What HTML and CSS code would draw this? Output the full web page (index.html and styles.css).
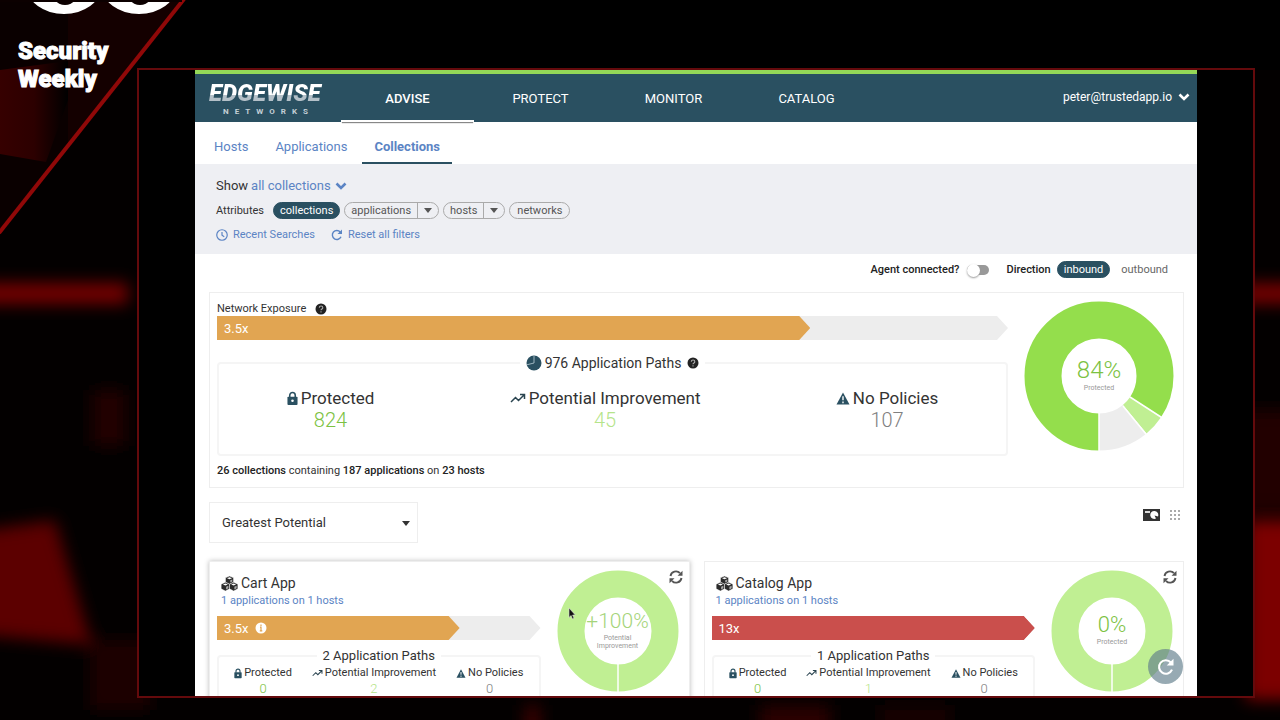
FILE: index.html
```
<!DOCTYPE html>
<html lang="en">
<head>
  <meta charset="UTF-8" />
  <meta name="viewport" content="width=device-width, initial-scale=1.0" />
  <title>Edgewise Networks - Collections</title>
  <link rel="stylesheet" href="styles.css">
</head>
<body>
  <!-- Shared icons -->
  <svg class="sprite" aria-hidden="true">
    <symbol id="chevron" viewBox="0 0 12 8"><path d="M1.500 1.500 6 6l4.500-4.500" fill="none" stroke="currentColor" stroke-width="2.600"/></symbol>
    <symbol id="caret" viewBox="0 0 8 5"><path d="M0 0h8L4 5z" fill="currentColor"/></symbol>
    <symbol id="clock" viewBox="0 0 24 24"><g fill="none" stroke="currentColor" stroke-width="2.400"><circle cx="12" cy="12" r="10.500"/><path d="M12 6v6.500l4.500 3"/></g></symbol>
    <symbol id="reload" viewBox="0 0 24 24"><path d="M20 15.500A9 9 0 1 1 18.500 6" fill="none" stroke="currentColor" stroke-width="2.800"/><path d="M22 1v9h-9z" fill="currentColor"/></symbol>
    <symbol id="help" viewBox="0 0 12 12"><circle cx="6" cy="6" r="5.500" fill="#222"/><path d="M4.300 4.700c0-2.200 3.500-2.200 3.500 0C7.800 6 6 5.900 6 7.300M6 8.300v1.100" fill="none" stroke="#aaa" stroke-width="1.100"/></symbol>
    <symbol id="info" viewBox="0 0 12 12"><circle cx="6" cy="6" r="5.500" fill="#fff"/><path d="M6 2.600v1.300M5 5.200h1v3.500M4.800 8.800h2.500" fill="none" stroke="#e1a552" stroke-width="1.200"/></symbol>
    <symbol id="pie" viewBox="0 0 16 16"><circle cx="8" cy="8" r="7.500" fill="#2a5061"/><path d="M8 .5V8L.8 9.800" fill="none" stroke="#9db4bf" stroke-width="1"/></symbol>
    <symbol id="lock" viewBox="0 0 12 16"><path d="M3 7V4.500a3 3 0 0 1 6 0V7" fill="none" stroke="#2a5061" stroke-width="1.700"/><rect x=".5" y="6" width="11" height="9" rx="1" fill="#2a5061"/><circle cx="6" cy="10.500" r="1.400" fill="#fff"/></symbol>
    <symbol id="trend" viewBox="0 0 16 10"><path d="M1 9l4.500-4.500 3 3L14 2M10 1.500h4.500V6" fill="none" stroke="#2a4450" stroke-width="1.500"/></symbol>
    <symbol id="warn" viewBox="0 0 16 15"><path d="M8 .5 15.500 14.500H.5z" fill="#2a5061"/><path d="M8 5v4.500M8 11v2" stroke="#fff" stroke-width="1.600"/></symbol>
    <symbol id="cubes" viewBox="0 0 18 16"><g fill="#2b2b2b" stroke="#fff" stroke-width=".5"><path d="M9 .1l4.300 1.800v4.800L9 8.800 4.700 6.700V1.900z"/><path d="M4.600 6.700l4.400 2v5L4.600 16 .1 13.700v-5z"/><path d="M13.400 6.700l4.500 2v5L13.400 16 9 13.700v-5z"/></g><path d="M6.400 2.300 9 3.400l2.600-1.100L9 1.300zM2 9l2.600 1.100L7.200 9 4.600 7.900zM10.800 9l2.600 1.100L16 9l-2.600-1.100z" fill="#fff"/><path d="M9.800 7V4.600L12 3.700v2.200zM5.400 14.300v-2.800l2.400-1.100v2.700zM14.200 14.300v-2.800l2.400-1.100v2.700z" fill="#aaa"/></symbol>
    <symbol id="sync" viewBox="0 0 14 14"><path d="M1.500 6A5.500 5.500 0 0 1 11 3.200M12.500 8A5.500 5.500 0 0 1 3 10.800" fill="none" stroke="currentColor" stroke-width="1.900"/><path d="M13.500.8v5H8.500zM.5 13.200v-5h5z" fill="currentColor"/></symbol>
  </svg>

  <!-- Broadcast backdrop -->
  <svg class="backdrop" viewBox="0 0 1280 720" preserveAspectRatio="none" aria-hidden="true">
    <defs>
      <filter id="soft" x="-50%" y="-50%" width="200%" height="200%"><feGaussianBlur stdDeviation="8"/></filter>
      <linearGradient id="wedge" x1="0" x2="1" y1="0" y2="0"><stop offset="0" stop-color="#360000"/><stop offset=".5" stop-color="#2c0000"/><stop offset="1" stop-color="#000"/></linearGradient>
    </defs>
    <rect width="1280" height="720" fill="#030000"/>
    <path d="M138 0H1280V70H138z"/>
    <g filter="url(#soft)">
      <rect x="-30" y="283" width="158" height="21" fill="#740000"/>
      <path d="M-30 532 55 520 92 645-30 634z" fill="#5c0000"/>
      <rect x="92" y="390" width="34" height="56" fill="#200000"/>
      <rect x="90" y="640" width="60" height="70" fill="#1d0000"/>
      <rect x="1240" y="283" width="70" height="21" fill="#740000"/>
      <rect x="1240" y="410" width="70" height="100" fill="#240000"/>
      <rect x="1246" y="520" width="70" height="180" fill="#7c0000"/>
      <rect x="525" y="705" width="15" height="30" fill="#3c0000"/>
      <rect x="760" y="705" width="70" height="30" fill="#2c0000"/>
      <rect x="880" y="705" width="70" height="30" fill="#180000"/>
    </g>
    <path d="M0 0H183L0 232z" fill="#0a0000"/>
    <path d="M68 0H183L68 146z" fill="#140000"/>
    <path d="M0 70 68 61V100L46 162 0 154z" fill="url(#wedge)"/>
    <path d="M184-1-1 233" stroke="#900808" stroke-width="4"/>
    <g fill="#fff"><ellipse cx="64" cy="-13" rx="37" ry="27"/><ellipse cx="139" cy="-13" rx="37" ry="27"/></g>
    <g fill="#0c0000"><ellipse cx="65" cy="-13" rx="15" ry="18"/><ellipse cx="140" cy="-13" rx="15" ry="18"/><rect width="182" height="2"/></g>
  </svg>
  <div class="channel">Security<br>Weekly</div>

  <div class="frame">
    <div class="app">
      <header class="topbar">
        <div class="brand">
          <span class="brand-name">EDGEWISE</span>
          <span class="brand-sub">NETWORKS</span>
        </div>
        <nav class="main-nav">
          <a class="active" href="#">ADVISE</a>
          <a href="#">PROTECT</a>
          <a href="#">MONITOR</a>
          <a href="#">CATALOG</a>
        </nav>
        <button class="account">peter@trustedapp.io <svg class="chev"><use href="#chevron"/></svg></button>
      </header>

      <nav class="sub-nav">
        <a href="#">Hosts</a>
        <a href="#">Applications</a>
        <a class="active" href="#">Collections</a>
      </nav>

      <section class="filters">
        <div class="show">Show <button class="link">all collections <svg class="chev"><use href="#chevron"/></svg></button></div>
        <div class="attributes">
          <span class="attr-label">Attributes</span>
          <button class="chip on">collections</button>
          <div class="chip split"><button>applications</button><button aria-label="More applications"><svg class="caret"><use href="#caret"/></svg></button></div>
          <div class="chip split"><button>hosts</button><button aria-label="More hosts"><svg class="caret"><use href="#caret"/></svg></button></div>
          <button class="chip">networks</button>
        </div>
        <div class="filter-links">
          <a href="#"><svg class="ic12"><use href="#clock"/></svg>Recent Searches</a>
          <a href="#"><svg class="ic12"><use href="#reload"/></svg>Reset all filters</a>
        </div>
      </section>

      <main class="content">
        <div class="options">
          <label for="agent">Agent connected?</label>
          <input class="toggle" type="checkbox" id="agent">
          <span class="direction">Direction</span>
          <button class="chip on">inbound</button>
          <button class="plain">outbound</button>
        </div>

        <section class="overview">
          <div class="details">
            <div class="exposure-title">Network Exposure <svg class="ic12"><use href="#help"/></svg></div>
            <div class="bar"><div class="fill orange" style="width: 75%">3.5x</div></div>
            <fieldset class="paths">
              <legend><svg class="ic16"><use href="#pie"/></svg>976 Application Paths<svg class="ic12 after"><use href="#help"/></svg></legend>
              <div class="stat"><span><svg class="lock"><use href="#lock"/></svg>Protected</span><b class="green">824</b></div>
              <div class="stat"><span><svg class="trend"><use href="#trend"/></svg>Potential Improvement</span><b class="lime">45</b></div>
              <div class="stat"><span><svg class="warn"><use href="#warn"/></svg>No Policies</span><b class="grey">107</b></div>
            </fieldset>
            <p class="summary"><strong>26 collections</strong> containing <strong>187 applications</strong> on <strong>23 hosts</strong></p>
          </div>
          <div class="donut">
            <svg viewBox="0 0 150 150">
              <g fill="none" stroke-width="37" transform="rotate(90 75 75)">
                <circle cx="75" cy="75" r="56" pathLength="1000" stroke="#94de4c" stroke-dasharray="844 156"/>
                <circle cx="75" cy="75" r="56" pathLength="1000" stroke="#c0ef93" stroke-dasharray="46 954" stroke-dashoffset="-844"/>
                <circle cx="75" cy="75" r="56" pathLength="1000" stroke="#ededed" stroke-dasharray="110 890" stroke-dashoffset="-890"/>
              </g>
              <path d="M75 112v38M106 96l34 22M99 105l27 33" stroke="#fff" stroke-width="1.500"/>
            </svg>
            <div class="donut-label"><span class="green">84%</span><small>Protected</small></div>
          </div>
        </section>

        <div class="sort-row">
          <div class="select">
            <select aria-label="Sort by"><option>Greatest Potential</option></select>
            <svg class="caret"><use href="#caret"/></svg>
          </div>
          <div class="views">
            <button aria-label="Card view"><svg width="17" height="12" viewBox="0 0 17 12"><path d="M0 0h17v12H0z" fill="#333"/><path d="M2 2h5v2H2z" fill="#ddd"/><path d="M11.500 2a4 4 0 1 0 1.500 7.600L11.500 6.500l3.500 1A4 4 0 0 0 11.500 2z" fill="#fff"/></svg></button>
            <button aria-label="Grid view"><svg width="12" height="12" viewBox="0 0 12 12"><path d="M1 2h2M5 2h2M9 2h2M1 6h2M5 6h2M9 6h2M1 10h2M5 10h2M9 10h2" stroke="#aaa" stroke-width="2"/></svg></button>
          </div>
        </div>

        <div class="cards">
          <article class="card raised">
            <div class="details">
              <h2><svg class="cubes"><use href="#cubes"/></svg>Cart App</h2>
              <a class="meta" href="#">1 applications on 1 hosts</a>
              <div class="bar"><div class="fill orange" style="width: 75%">3.5x <svg class="ic12"><use href="#info"/></svg></div></div>
              <fieldset class="paths small">
                <legend>2 Application Paths</legend>
                <div class="stat"><span><svg class="lock"><use href="#lock"/></svg>Protected</span><b class="green">0</b></div>
                <div class="stat"><span><svg class="trend"><use href="#trend"/></svg>Potential Improvement</span><b class="lime">2</b></div>
                <div class="stat"><span><svg class="warn"><use href="#warn"/></svg>No Policies</span><b class="grey">0</b></div>
              </fieldset>
            </div>
            <div class="donut">
              <svg viewBox="0 0 122 122"><circle cx="61" cy="61" r="47" fill="none" stroke="#c0ef93" stroke-width="27"/><path d="M61 94v28" stroke="#fff" stroke-width="1.500"/></svg>
              <div class="donut-label"><span class="lime-dark">+100%</span><small>Potential<br>Improvement</small></div>
            </div>
            <button class="sync" aria-label="Refresh Cart App"><svg><use href="#sync"/></svg></button>
          </article>

          <article class="card">
            <div class="details">
              <h2><svg class="cubes"><use href="#cubes"/></svg>Catalog App</h2>
              <a class="meta" href="#">1 applications on 1 hosts</a>
              <div class="bar"><div class="fill red" style="width: 100%">13x</div></div>
              <fieldset class="paths small">
                <legend>1 Application Paths</legend>
                <div class="stat"><span><svg class="lock"><use href="#lock"/></svg>Protected</span><b class="green">0</b></div>
                <div class="stat"><span><svg class="trend"><use href="#trend"/></svg>Potential Improvement</span><b class="lime">1</b></div>
                <div class="stat"><span><svg class="warn"><use href="#warn"/></svg>No Policies</span><b class="grey">0</b></div>
              </fieldset>
            </div>
            <div class="donut">
              <svg viewBox="0 0 122 122"><circle cx="61" cy="61" r="47" fill="none" stroke="#c0ef93" stroke-width="27"/><path d="M61 94v28" stroke="#fff" stroke-width="1.500"/></svg>
              <div class="donut-label"><span class="green">0%</span><small>Protected</small></div>
            </div>
            <button class="sync" aria-label="Refresh Catalog App"><svg><use href="#sync"/></svg></button>
          </article>
        </div>
      </main>

      <button class="fab" aria-label="Refresh"><svg><use href="#reload"/></svg></button>
    </div>
  </div>

  <svg class="cursor" viewBox="0 0 8 13" aria-hidden="true"><path d="M1 1v9.500l2-2 1.500 3.500 1.500-.7L4.600 8H7.300z" fill="#111" stroke="#ddd" stroke-width=".6"/></svg>
</body>
</html>
```
FILE: styles.css
```
* {
  box-sizing: border-box;
}
body {
  margin: 0;
  height: 100vh;
  overflow: hidden;
  display: flex;
  padding: 68px 25px 22px 137px;
  background: #000;
  color: #333;
  font-family: Roboto, "Liberation Sans", sans-serif;
  font-size: 11px;
}
a {
  color: #5b84c4;
  text-decoration: none;
}
button {
  border: 0;
  padding: 0;
  background: none;
  color: inherit;
  font: inherit;
  cursor: pointer;
}
svg {
  display: block;
  flex: none;
}
.sprite {
  position: absolute;
  width: 0;
  height: 0;
}
.backdrop {
  position: absolute;
  top: 0;
  left: 0;
  width: 100%;
  height: 100%;
}
.channel {
  position: absolute;
  top: 37px;
  left: 18px;
  color: #fff;
  font: 900 24px/28px Impact, Roboto, sans-serif;
  -webkit-text-stroke: 1px #fff;
}
.frame {
  position: relative;
  flex: 1;
  display: flex;
  min-width: 0;
  padding: 0 56px;
  background: #000;
  border: 2px solid #640a0c;
}
.app {
  position: relative;
  flex: 1;
  min-width: 0;
  overflow: hidden;
  background: #fff;
}

/* Header */
.topbar {
  display: flex;
  height: 52px;
  border-top: 4px solid #94d858;
  background: #2a5061;
  color: #fff;
}
.brand {
  width: 146px;
  padding: 6px 0 0 14px;
}
.brand-name {
  display: block;
  font: italic 900 24px/27px Roboto, sans-serif;
  background: linear-gradient(#fff 55%, #b4c0c8 55%);
  -webkit-background-clip: text;
  background-clip: text;
  color: transparent;
}
.brand-sub {
  display: block;
  padding-left: 14px;
  color: #c3cfd6;
  font: bold 8px/10px Roboto, sans-serif;
  letter-spacing: 6px;
}
.main-nav {
  display: flex;
}
.main-nav a {
  width: 133px;
  color: #fff;
  font-size: 13px;
  line-height: 50px;
  text-align: center;
}
.main-nav a.active {
  font-weight: 500;
  border-bottom: 2px solid #fff;
  box-shadow: 0 2px 1px -1px #888;
}
.account {
  display: flex;
  align-items: center;
  gap: 6px;
  height: 46px;
  margin: 0 7px 0 auto;
  font-size: 12px;
}
.chev {
  width: 12px;
  height: 8px;
}
.sub-nav {
  display: flex;
  height: 42px;
  padding-left: 7px;
  gap: 3px;
}
.sub-nav a {
  padding: 0 12px;
  font-size: 13px;
  line-height: 50px;
}
.sub-nav a.active {
  font-weight: bold;
  border-bottom: 2px solid #2a5061;
}

/* Filters */
.filters {
  height: 90px;
  padding: 12px 21px;
  background: #eeeff3;
}
.show {
  display: flex;
  gap: 3px;
  font-size: 13px;
  line-height: 20px;
}
.link {
  display: flex;
  align-items: center;
  gap: 4px;
  color: #5b84c4;
}
.attributes {
  display: flex;
  align-items: center;
  gap: 4px;
  margin-top: 6px;
}
.attr-label {
  margin-right: 5px;
}
.chip {
  height: 17px;
  padding: 0 7px;
  border: 1px solid #aaa;
  border-radius: 9px;
  color: #555;
  line-height: 15px;
}
.chip.on {
  padding: 0 6px;
  background: #2a5061;
  border-color: #2a5061;
  color: #fff;
}
.chip.split {
  display: flex;
  padding: 0;
}
.split button {
  padding: 0 6px;
}
.split button + button {
  border-left: 1px solid #aaa;
}
.caret {
  width: 8px;
  height: 5px;
}
.filter-links {
  display: flex;
  gap: 16px;
  margin-top: 7px;
}
.filter-links a {
  display: flex;
  align-items: center;
  gap: 5px;
  line-height: 17px;
}
.ic12 {
  width: 12px;
  height: 12px;
}
.ic16 {
  width: 16px;
  height: 16px;
}

/* Overview */
.content {
  padding: 0 13px 0 14px;
}
.options {
  display: flex;
  align-items: center;
  justify-content: flex-end;
  height: 31px;
  padding-right: 16px;
  color: #222;
}
.options label,
.direction {
  font-weight: 500;
}
.toggle {
  appearance: none;
  width: 22px;
  height: 10px;
  margin: 0 17px 0 8px;
  border-radius: 6px;
  background: #999;
}
.toggle::before {
  content: "";
  display: block;
  width: 13px;
  height: 13px;
  margin-top: -1px;
  border-radius: 50%;
  background: #fff;
  box-shadow: 0 1px 2px #999;
}
.options .chip {
  margin: 0 11px 0 6px;
}
.plain {
  color: #666;
}
.overview {
  display: flex;
  gap: 16px;
  margin-top: 7px;
  padding: 8px 9px 8px 7px;
  border: 1px solid #eee;
}
.details {
  flex: 1;
  min-width: 0;
}
.exposure-title {
  display: flex;
  align-items: center;
  gap: 9px;
  line-height: 15px;
}
.bar {
  height: 24px;
  background: #ededed;
  clip-path: polygon(0 0, calc(100% - 11px) 0, 100% 50%, calc(100% - 11px) 100%, 0 100%);
}
.fill {
  display: flex;
  align-items: center;
  gap: 6px;
  height: 100%;
  padding-left: 7px;
  color: #fff;
  font-size: 13px;
  clip-path: polygon(0 0, calc(100% - 11px) 0, 100% 50%, calc(100% - 11px) 100%, 0 100%);
}
.orange {
  background: #e1a552;
}
.red {
  background: #ca4f4c;
}
.paths {
  display: flex;
  justify-content: space-around;
  min-width: 0;
  height: 102px;
  margin: 14px 0 0;
  padding: 15px 0 0;
  border: 2px solid #f5f5f5;
  border-radius: 4px;
}
.paths legend {
  display: flex;
  align-items: center;
  gap: 3px;
  margin: 0 auto;
  padding: 0 6px;
  font-size: 14px;
  line-height: 18px;
}
.after {
  margin-left: 3px;
}
.stat {
  display: flex;
  flex-direction: column;
  align-items: center;
  font-size: 17px;
  line-height: 22px;
}
.stat span {
  display: flex;
  align-items: center;
  gap: 3px;
}
.stat b {
  font-size: 20px;
  font-weight: 300;
  line-height: 22px;
}
.lock {
  width: 11px;
  height: 15px;
}
.trend {
  width: 16px;
  height: 10px;
}
.warn {
  width: 14px;
  height: 13px;
}
.green {
  color: #7cc242;
}
.lime {
  color: #b5e48a;
}
.lime-dark {
  color: #a5d47a;
}
.grey {
  color: #808080;
}
.summary {
  margin: 7px 0 0;
  line-height: 16px;
}
.summary strong {
  font-weight: 500;
  color: #222;
}
.donut {
  display: grid;
  align-self: flex-start;
  place-items: center;
  width: 150px;
}
.donut > * {
  grid-area: 1 / 1;
}
.donut svg {
  width: 100%;
}
.donut-label {
  text-align: center;
}
.donut-label span {
  display: block;
  font-size: 24px;
  font-weight: 300;
  line-height: 28px;
}
.donut-label small {
  display: block;
  margin-bottom: 4px;
  color: #999;
  font-size: 7px;
  line-height: 8px;
}

/* Sorting and view switch */
.sort-row {
  display: flex;
  justify-content: space-between;
  margin-top: 14px;
}
.select {
  position: relative;
  width: 209px;
}
.select select {
  appearance: none;
  width: 100%;
  height: 41px;
  padding: 0 12px;
  border: 1px solid #eee;
  background: #fff;
  color: #333;
  font: 13px Roboto, "Liberation Sans", sans-serif;
}
.select .caret {
  position: absolute;
  top: 19px;
  right: 8px;
}
.views {
  display: flex;
  align-items: center;
  gap: 9px;
  height: 26px;
  padding-right: 3px;
}

/* Cards */
.cards {
  display: grid;
  grid-template-columns: 1fr 1fr;
  gap: 14px;
  margin-top: 18px;
}
.card {
  position: relative;
  display: flex;
  gap: 16px;
  padding: 8px 10px 8px 7px;
  border: 1px solid #eee;
}
.card.raised {
  box-shadow: 0 0 5px #bbb;
}
.card h2 {
  display: flex;
  align-items: center;
  gap: 3px;
  margin: 4px 0 0 4px;
  font-size: 14px;
  font-weight: normal;
  line-height: 19px;
}
.cubes {
  width: 17px;
  height: 15px;
}
.meta {
  display: block;
  margin: 0 0 7px 4px;
  line-height: 16px;
}
.card .donut {
  width: 122px;
}
.card .donut-label span {
  font-size: 22px;
  line-height: 26px;
}
.card .donut-label .lime-dark {
  font-size: 21px;
}
.paths.small {
  justify-content: center;
  gap: 20px;
  margin-top: 7px;
  padding: 0;
}
.small legend {
  font-size: 13px;
}
.small .stat {
  font-size: 11px;
  line-height: 16px;
}
.small .stat span {
  gap: 2px;
}
.small .stat b {
  font-size: 13px;
  line-height: 16px;
}
.small .lock {
  width: 8px;
  height: 11px;
}
.small .trend {
  width: 11px;
  height: 8px;
}
.small .warn {
  width: 10px;
  height: 9px;
}
.sync {
  position: absolute;
  top: 8px;
  right: 6px;
  color: #555;
}
.sync svg {
  width: 14px;
  height: 14px;
}
.fab {
  position: absolute;
  right: 14px;
  bottom: 12px;
  display: grid;
  place-items: center;
  width: 35px;
  height: 35px;
  border-radius: 50%;
  background: rgba(96, 125, 139, 0.65);
  color: #fff;
}
.fab svg {
  width: 18px;
  height: 18px;
}
.cursor {
  position: absolute;
  top: 607px;
  left: 568px;
  width: 8px;
  height: 13px;
}
```
